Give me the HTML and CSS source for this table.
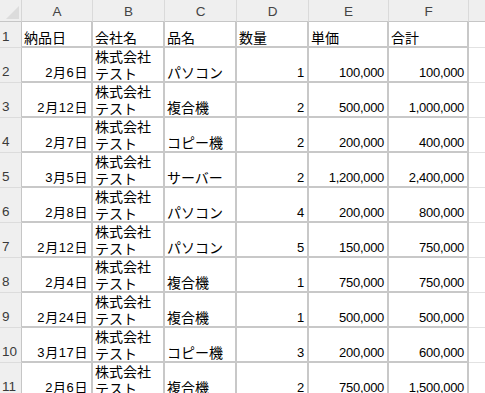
FILE: index.html
```html
<!DOCTYPE html>
<html lang="ja">
<head>
<meta charset="utf-8">
<link rel="stylesheet" href="styles.css">
</head>
<body>
<div class="sheet">
  <div class="corner"><span class="tri"></span></div>
  <div class="colh">A</div><div class="colh">B</div><div class="colh">C</div><div class="colh">D</div><div class="colh wide">E</div><div class="colh wide">F</div><div class="colh rest"></div>

  <div class="rowh">1</div>
  <div class="cell"><span>納品日</span></div><div class="cell"><span>会社名</span></div><div class="cell"><span>品名</span></div><div class="cell"><span>数量</span></div><div class="cell"><span>単価</span></div><div class="cell"><span>合計</span></div><div class="blank"></div>

  <div class="rowh">2</div>
  <div class="cell r"><span class="date">2月6日</span></div><div class="cell"><span class="two">株式会社<br>テスト</span></div><div class="cell"><span>パソコン</span></div><div class="cell r"><span class="num">1</span></div><div class="cell r"><span class="num">100,000</span></div><div class="cell r"><span class="num">100,000</span></div><div class="blank"></div>

  <div class="rowh">3</div>
  <div class="cell r"><span class="date">2月12日</span></div><div class="cell"><span class="two">株式会社<br>テスト</span></div><div class="cell"><span>複合機</span></div><div class="cell r"><span class="num">2</span></div><div class="cell r"><span class="num">500,000</span></div><div class="cell r"><span class="num">1,000,000</span></div><div class="blank"></div>

  <div class="rowh">4</div>
  <div class="cell r"><span class="date">2月7日</span></div><div class="cell"><span class="two">株式会社<br>テスト</span></div><div class="cell"><span>コピー機</span></div><div class="cell r"><span class="num">2</span></div><div class="cell r"><span class="num">200,000</span></div><div class="cell r"><span class="num">400,000</span></div><div class="blank"></div>

  <div class="rowh">5</div>
  <div class="cell r"><span class="date">3月5日</span></div><div class="cell"><span class="two">株式会社<br>テスト</span></div><div class="cell"><span>サーバー</span></div><div class="cell r"><span class="num">2</span></div><div class="cell r"><span class="num">1,200,000</span></div><div class="cell r"><span class="num">2,400,000</span></div><div class="blank"></div>

  <div class="rowh">6</div>
  <div class="cell r"><span class="date">2月8日</span></div><div class="cell"><span class="two">株式会社<br>テスト</span></div><div class="cell"><span>パソコン</span></div><div class="cell r"><span class="num">4</span></div><div class="cell r"><span class="num">200,000</span></div><div class="cell r"><span class="num">800,000</span></div><div class="blank"></div>

  <div class="rowh">7</div>
  <div class="cell r"><span class="date">2月12日</span></div><div class="cell"><span class="two">株式会社<br>テスト</span></div><div class="cell"><span>パソコン</span></div><div class="cell r"><span class="num">5</span></div><div class="cell r"><span class="num">150,000</span></div><div class="cell r"><span class="num">750,000</span></div><div class="blank"></div>

  <div class="rowh">8</div>
  <div class="cell r"><span class="date">2月4日</span></div><div class="cell"><span class="two">株式会社<br>テスト</span></div><div class="cell"><span>複合機</span></div><div class="cell r"><span class="num">1</span></div><div class="cell r"><span class="num">750,000</span></div><div class="cell r"><span class="num">750,000</span></div><div class="blank"></div>

  <div class="rowh">9</div>
  <div class="cell r"><span class="date">2月24日</span></div><div class="cell"><span class="two">株式会社<br>テスト</span></div><div class="cell"><span>複合機</span></div><div class="cell r"><span class="num">1</span></div><div class="cell r"><span class="num">500,000</span></div><div class="cell r"><span class="num">500,000</span></div><div class="blank"></div>

  <div class="rowh">10</div>
  <div class="cell r"><span class="date">3月17日</span></div><div class="cell"><span class="two">株式会社<br>テスト</span></div><div class="cell"><span>コピー機</span></div><div class="cell r"><span class="num">3</span></div><div class="cell r"><span class="num">200,000</span></div><div class="cell r"><span class="num">600,000</span></div><div class="blank"></div>

  <div class="rowh">11</div>
  <div class="cell r"><span class="date">2月6日</span></div><div class="cell"><span class="two">株式会社<br>テスト</span></div><div class="cell"><span>複合機</span></div><div class="cell r"><span class="num">2</span></div><div class="cell r"><span class="num">750,000</span></div><div class="cell r"><span class="num">1,500,000</span></div><div class="blank"></div>
</div>
</body>
</html>
```
FILE: styles.css
```css
html, body {
  margin: 0;
  padding: 0;
  background: #ffffff;
  overflow: hidden;
}
.sheet {
  display: grid;
  grid-template-columns: 22px 71px 72px 72px 72px 80px 80px 1fr;
  grid-template-rows: 22px 26px repeat(10, 35px);
  width: 485px;
  font-family: "Noto Sans CJK JP", "Liberation Sans", sans-serif;
  font-size: 14px;
  color: #000;
}
.corner {
  position: relative;
  background: #efefef;
  border-right: 1px solid #d6d6d6;
  border-bottom: 1px solid #c6c6c6;
  box-sizing: border-box;
}
.tri {
  position: absolute;
  right: 2px;
  bottom: 2px;
  width: 0;
  height: 0;
  border-left: 13px solid transparent;
  border-bottom: 13px solid #dcdcdc;
}
.colh {
  background: #efefef;
  border-right: 1px solid #dadada;
  border-bottom: 1px solid #c6c6c6;
  box-sizing: border-box;
  display: flex;
  align-items: center;
  justify-content: center;
  font-family: "Liberation Sans", sans-serif;
  font-size: 13.5px;
  color: #444;
  padding-top: 1px;
}
.colh.rest {
  border-right: none;
}
.rowh {
  background: #efefef;
  border-right: 1px solid #c6c6c6;
  border-bottom: 1px solid #dcdcdc;
  box-sizing: border-box;
  display: flex;
  align-items: flex-end;
  padding: 0 0 2px 2px;
  font-family: "Liberation Sans", sans-serif;
  font-size: 13.5px;
  line-height: 16px;
  color: #3a3a3a;
}
.cell {
  border-right: 2px solid #c8c8c8;
  border-bottom: 2px solid #c8c8c8;
  box-sizing: border-box;
  display: flex;
  align-items: flex-end;
  padding: 0 2px 0 2px;
  white-space: nowrap;
}
.cell span {
  line-height: 17px;
}
.cell .two {
  line-height: 16.5px;
}
.cell.r {
  justify-content: flex-end;
  padding-right: 3px;
}
.num {
  font-family: "Liberation Sans", sans-serif;
  font-size: 13px;
  letter-spacing: -0.3px;
}
.date {
  font-family: "Liberation Sans", "Noto Sans CJK JP", sans-serif;
  font-size: 13px;
  letter-spacing: 0.6px;
}
.blank {
  border-bottom: 1px solid #e2e2e2;
  box-sizing: border-box;
}
```
